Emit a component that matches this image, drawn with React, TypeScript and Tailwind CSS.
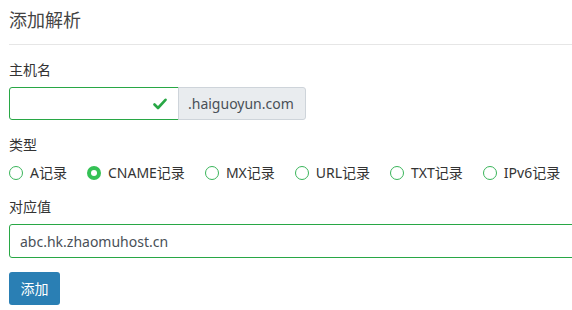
import React from 'react';

const font = { fontFamily: '"Noto Sans", "Noto Sans CJK SC", sans-serif' };

const types = ['A记录', 'CNAME记录', 'MX记录', 'URL记录', 'TXT记录', 'IPv6记录'];

const Radio = ({ label, checked }: { label: string; checked?: boolean }) => (
    <label className="flex items-center shrink-0 whitespace-nowrap gap-[7px] mr-[20px]">
        {checked ? (
            <span className="w-[14px] h-[14px] rounded-full bg-[#34c155] flex items-center justify-center">
                <span className="w-[6px] h-[6px] rounded-full bg-white" />
            </span>
        ) : (
            <span className="w-[14px] h-[14px] rounded-full border border-[#3ab55a] bg-white" />
        )}
        <span>{label}</span>
    </label>
);

export default function App() {
    return (
        <div className="w-[572px] h-[310px] overflow-hidden bg-white text-[#333] text-[14px] leading-[21px]" style={font}>
            <div className="pl-[9px]">
                <h3 className="pt-[8px] text-[18px] leading-[24px] text-[#444]">添加解析</h3>
                <div className="mt-[12px] border-t border-[#e6e6e6]" />

                <div className="mt-[14px] mb-[7px]">主机名</div>
                <div className="flex">
                    <div className="w-[170px] h-[33px] border border-[#28a745] rounded-l-[3px] flex items-center justify-end pr-[11px]">
                        <svg width="14" height="12" viewBox="0 0 14 12">
                            <path d="M1.5 6.5 L5 10 L12.5 1.8" fill="none" stroke="#28a745" strokeWidth="2.6" strokeLinecap="round" strokeLinejoin="round" />
                        </svg>
                    </div>
                    <div className="h-[33px] w-[128px] -ml-px bg-[#e9ecef] border border-[#ced4da] rounded-r-[3px] flex items-center pl-[9px] text-[#495057]">
                        .haiguoyun.com
                    </div>
                </div>

                <div className="mt-[14px] mb-[7px]">类型</div>
                <div className="flex items-center">
                    {types.map((t, i) => (
                        <Radio key={t} label={t} checked={i === 1} />
                    ))}
                </div>

                <div className="mt-[13px] mb-[7px]">对应值</div>
                <div className="w-[600px] h-[34px] border border-[#28a745] rounded-[3px] flex items-center pl-[10px] text-[#495057]">
                    abc.hk.zhaomuhost.cn
                </div>

                <button className="mt-[14px] h-[33px] w-[51px] rounded-[3px] bg-[#2a7fb4] text-white text-[14px]">添加</button>
            </div>
        </div>
    );
}
